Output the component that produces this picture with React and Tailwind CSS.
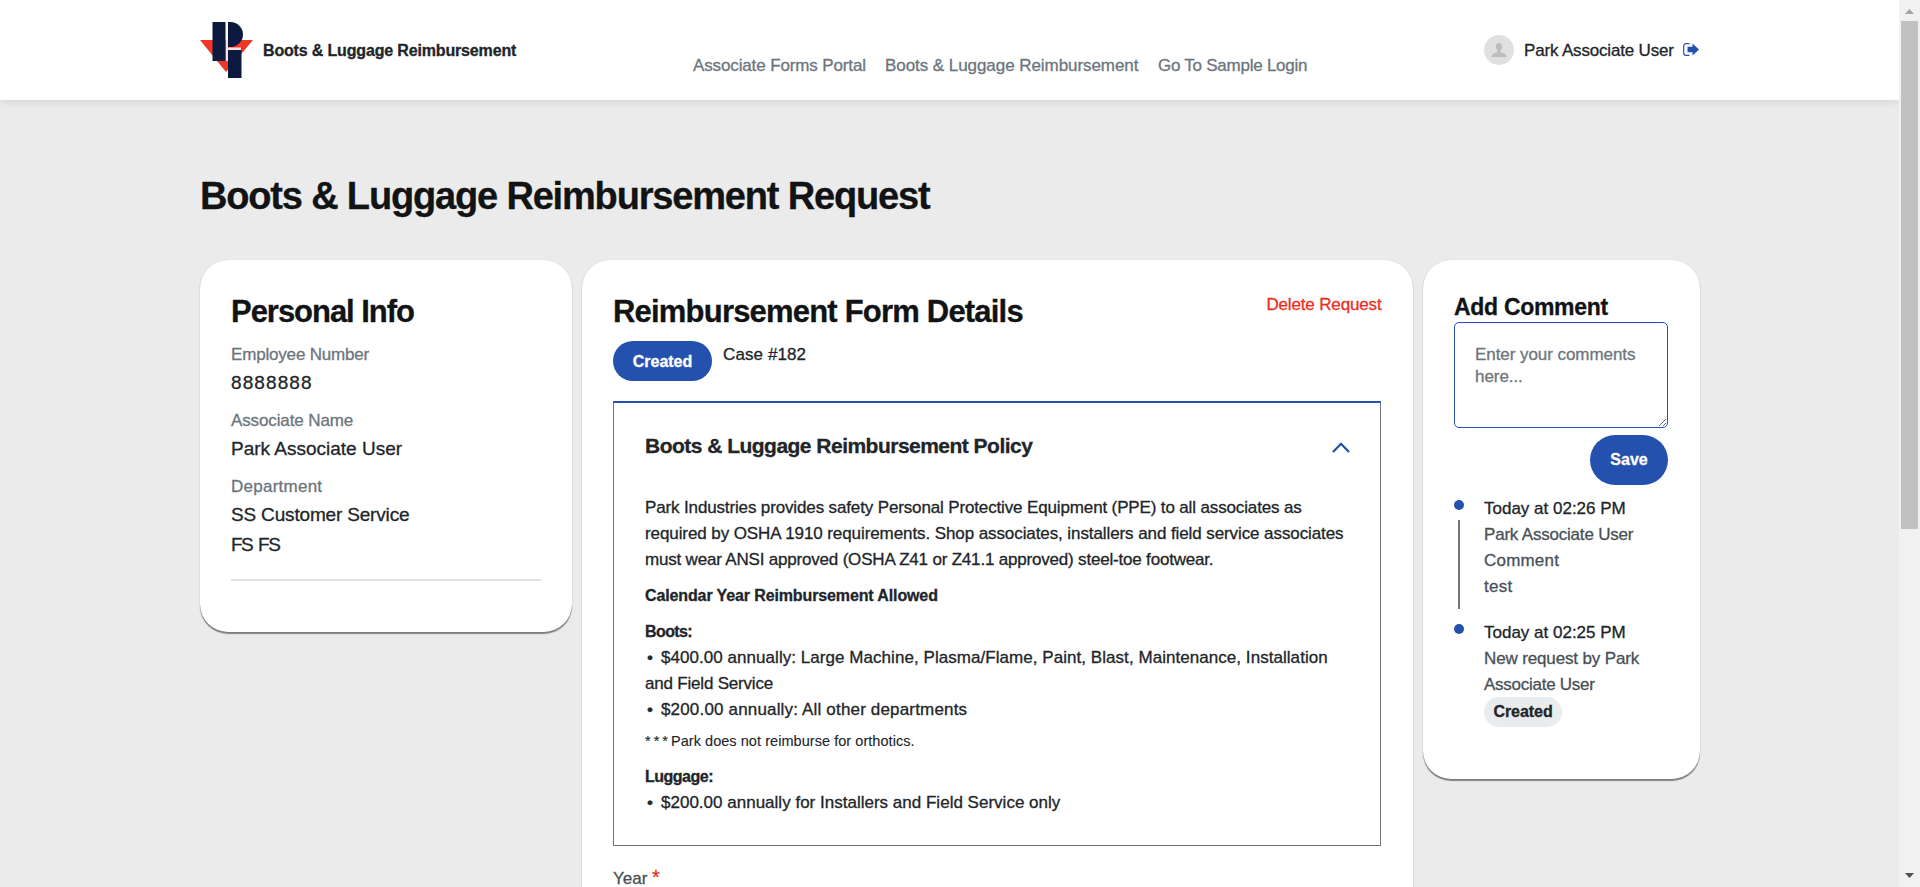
function Card({ className, children }) {
  return (
    <section className={"shrink-0 rounded-[28px] bg-white px-[31px] shadow-[0_2px_1px_rgba(0,0,0,0.45),0_0_1px_rgba(0,0,0,0.2)] " + className}>
      {children}
    </section>
  );
}

function Field({ label, labelClass, first, children }) {
  return (
    <div className={first ? "" : "mt-[10px]"}>
      <div className={"text-[#6c757d] " + labelClass}>{label}</div>
      <div className="text-[19px] leading-[30px]">{children}</div>
    </div>
  );
}

function Bullet({ children, className }) {
  return (
    <p className={className}>
      <span className="inline-block w-[16px] pl-[2px] tracking-normal">•</span>
      {children}
    </p>
  );
}

function Logo() {
  return (
    <svg className="ml-px" width="53" height="56" viewBox="0 0 53 56">
      <path d="M0 18H53L26 50Z" fill="#f03726" />
      <path d="M25.500 0H28V25.500H41V28H28V39H25.500Z" fill="#fff" opacity=".85" />
      <path d="M12.500 0H25.500V39H12.500Z M28 0H30.500A12.500 12.500 0 0 1 30.500 25H28Z M28 28H41.500V56H28Z" fill="#0c1a40" />
    </svg>
  );
}

function Scrollbar() {
  return (
    <div className="flex h-full w-[21px] flex-col items-center bg-[#f1f1f1]">
      <svg className="mt-[9px]" width="9" height="5" viewBox="0 0 9 5">
        <path d="M0 5L4.500 0L9 5Z" fill="#a3a3a3" />
      </svg>
      <div className="mt-[7px] h-[508px] w-[17px] bg-[#c1c1c1]" />
      <svg className="mt-auto mb-[9px]" width="9" height="5" viewBox="0 0 9 5">
        <path d="M0 0L4.500 5L9 0Z" fill="#505050" />
      </svg>
    </div>
  );
}

export default function App() {
  return (
    <div className="flex h-[887px] w-[1920px] overflow-hidden bg-[#ebebeb] font-['Liberation_Sans',Arial,sans-serif] text-[17px] leading-[26px] text-[#212529] [-webkit-text-stroke:0.3px]">
      <div className="h-full w-[1899px] overflow-hidden">
        <header className="flex h-[100px] bg-white pl-[199px] shadow-[0_2px_8px_rgba(0,0,0,0.1)]">
          <div className="flex w-[494px] pt-[22px]">
            <Logo />
            <div className="mt-[16px] ml-[10px] text-[16px] font-bold tracking-[-0.16px] whitespace-nowrap">Boots &amp; Luggage Reimbursement</div>
          </div>
          <nav className="flex w-[791px] pt-[53px] whitespace-nowrap text-[#6c757d]">
            <a className="w-[192px] tracking-[-0.13px]">Associate Forms Portal</a>
            <a className="w-[273px] tracking-[-0.06px]">Boots &amp; Luggage Reimbursement</a>
            <a className="tracking-[-0.25px]">Go To Sample Login</a>
          </nav>
          <div className="flex pt-[35px]">
            <svg width="30" height="30" viewBox="0 0 30 30">
              <circle cx="15" cy="15" r="15" fill="#e0e0e0" />
              <path d="M15 8C12.800 8 11.800 9.600 11.900 11.500C12 13.400 12.800 14.600 13.400 15.200V17C12 18 7.500 18.200 7.300 22H22.700C22.500 18.200 18 18 16.600 17V15.200C17.200 14.600 18 13.400 18.100 11.500C18.200 9.600 17.200 8 15 8Z" fill="#bdbdbd" />
            </svg>
            <div className="mt-[3px] ml-[10px] w-[159px] tracking-[-0.17px] whitespace-nowrap">Park Associate User</div>
            <svg className="mt-[8px]" width="16" height="13" viewBox="0 0 16 13">
              <path d="M6.500 0.700H3A2.300 2.300 0 0 0 0.700 3V10A2.300 2.300 0 0 0 3 12.300H6.500" fill="none" stroke="#2451ae" strokeWidth="1.200" />
              <path d="M4.500 3.700H9.500V0.500L16 6.500L9.500 12.500V9.300H4.500Z" fill="#2451ae" />
            </svg>
          </div>
        </header>

        <main className="pl-[200px]">
          <h1 className="pt-[71px] text-[38px] leading-[50px] font-bold tracking-[-1.17px] text-[#111315]">
            Boots &amp; Luggage Reimbursement Request
          </h1>
          <div className="mt-[39px] flex items-start gap-[10px]">
            <Card className="h-[372px] w-[372px] pt-[32px]">
              <h2 className="text-[31px] leading-[40px] font-bold tracking-[-1.03px] text-[#111315]">Personal Info</h2>
              <div className="mt-[10px]">
                <Field first label="Employee Number" labelClass="tracking-[-0.18px]">
                  <span className="tracking-[1.1px]">8888888</span>
                </Field>
                <Field label="Associate Name" labelClass="tracking-[-0.12px]">
                  Park Associate User
                </Field>
                <Field label="Department" labelClass="tracking-[0.25px]">
                  <div className="tracking-[-0.17px]">SS Customer Service</div>
                  <div className="tracking-[-1.5px] [word-spacing:2px]">FS FS</div>
                </Field>
              </div>
              <hr className="mt-[19px] w-[310px] border-t-2 border-[#dee2e6]" />
            </Card>

            <Card className="h-[700px] w-[831px] pt-[32px]">
              <div className="flex items-start justify-between">
                <h2 className="text-[31px] leading-[40px] font-bold tracking-[-0.8px] text-[#111315]">Reimbursement Form Details</h2>
                <a className="mr-[0.5px] tracking-[-0.15px] text-[#ee2d24]">Delete Request</a>
              </div>
              <div className="mt-[9px] flex">
                <span className="flex h-[40px] w-[99px] items-center justify-center rounded-[20px] bg-[#2451ae] pt-[2px] text-[16px] font-bold text-white">Created</span>
                <span className="ml-[11px] pt-px tracking-[0.1px]">Case #182</span>
              </div>
              <div className="mt-[20px] h-[445px] w-[768px] border border-t-2 border-[#6c757d] border-t-[#2451ae] pt-[28px] pr-[30px] pl-[31px]">
                <div className="flex justify-between">
                  <h3 className="text-[21px] leading-[30px] font-bold tracking-[-0.52px]">Boots &amp; Luggage Reimbursement Policy</h3>
                  <svg className="mt-[11px]" width="18" height="11" viewBox="0 0 18 11">
                    <path d="M1 10L9 1.800L17 10" fill="none" stroke="#2451ae" strokeWidth="2.300" />
                  </svg>
                </div>
                <div className="mt-[34px] whitespace-nowrap">
                  <p className="tracking-[-0.14px]">Park Industries provides safety Personal Protective Equipment (PPE) to all associates as</p>
                  <p className="tracking-[-0.09px]">required by OSHA 1910 requirements. Shop associates, installers and field service associates</p>
                  <p className="tracking-[-0.19px]">must wear ANSI approved (OSHA Z41 or Z41.1 approved) steel-toe footwear.</p>
                </div>
                <p className="mt-[10px] text-[16px] font-bold tracking-[-0.12px]">Calendar Year Reimbursement Allowed</p>
                <div className="mt-[10px] whitespace-nowrap">
                  <p className="text-[16px] font-bold tracking-[-0.6px]">Boots:</p>
                  <Bullet className="tracking-[0.05px]">$400.00 annually: Large Machine, Plasma/Flame, Paint, Blast, Maintenance, Installation</Bullet>
                  <p className="tracking-[-0.2px]">and Field Service</p>
                  <Bullet className="tracking-[0.17px]">$200.00 annually: All other departments</Bullet>
                </div>
                <p className="mt-[5px] text-[14.5px] tracking-[0.05px] [-webkit-text-stroke:0.1px]">
                  <span className="tracking-[3px]">***</span>Park does not reimburse for orthotics.
                </p>
                <div className="mt-[10px]">
                  <p className="text-[16px] font-bold tracking-[-0.5px]">Luggage:</p>
                  <Bullet className="tracking-[0.01px]">$200.00 annually for Installers and Field Service only</Bullet>
                </div>
              </div>
              <div className="mt-[20px] text-[#495057]">
                Year <span className="text-[20px] leading-[20px] text-[#ee2d24]">*</span>
              </div>
            </Card>

            <Card className="h-[519px] w-[277px] pt-[33px]">
              <h2 className="text-[23px] leading-[28px] font-bold tracking-[-0.3px] text-[#111315]">Add Comment</h2>
              <textarea
                className="mt-px block h-[106px] w-[214px] resize rounded-[5px] border border-[#2451ae] bg-white pt-[21px] pr-[15px] pb-[20px] pl-[20px] leading-[21.5px] tracking-[-0.06px] placeholder:text-[#6c757d] placeholder:opacity-100"
                placeholder="Enter your comments here..."
              />
              <button className="mt-[7px] ml-[136px] block h-[50px] w-[78px] rounded-[25px] bg-[#2451ae] pb-px text-[16px] font-bold text-white">Save</button>
              <div className="mt-[11px] flex h-[113px]">
                <div className="flex w-[30px] flex-col items-start pt-[4px]">
                  <span className="size-[10px] rounded-full bg-[#2451ae]" />
                  <span className="mt-[10px] ml-[4px] h-[89px] w-[2px] bg-[#6c757d]" />
                </div>
                <div className="whitespace-nowrap text-[#495057]">
                  <p className="text-[#212529]">Today at 02:26 PM</p>
                  <p className="tracking-[-0.2px]">Park Associate User</p>
                  <p className="tracking-[0.2px]">Comment</p>
                  <p className="tracking-[0.3px]">test</p>
                </div>
              </div>
              <div className="mt-[11px] flex">
                <div className="w-[30px] pt-[4px]">
                  <span className="block size-[10px] rounded-full bg-[#2451ae]" />
                </div>
                <div className="whitespace-nowrap text-[#495057]">
                  <p className="text-[#212529]">Today at 02:25 PM</p>
                  <p className="tracking-[-0.14px]">New request by Park</p>
                  <p className="tracking-[-0.26px]">Associate User</p>
                  <div className="-mt-px flex h-[30px] w-[78px] items-center justify-center rounded-[15px] bg-[#e9ecef] text-[16px] font-bold tracking-[-0.05px] text-[#212529]">Created</div>
                </div>
              </div>
            </Card>
          </div>
        </main>
      </div>
      <Scrollbar />
    </div>
  );
}
